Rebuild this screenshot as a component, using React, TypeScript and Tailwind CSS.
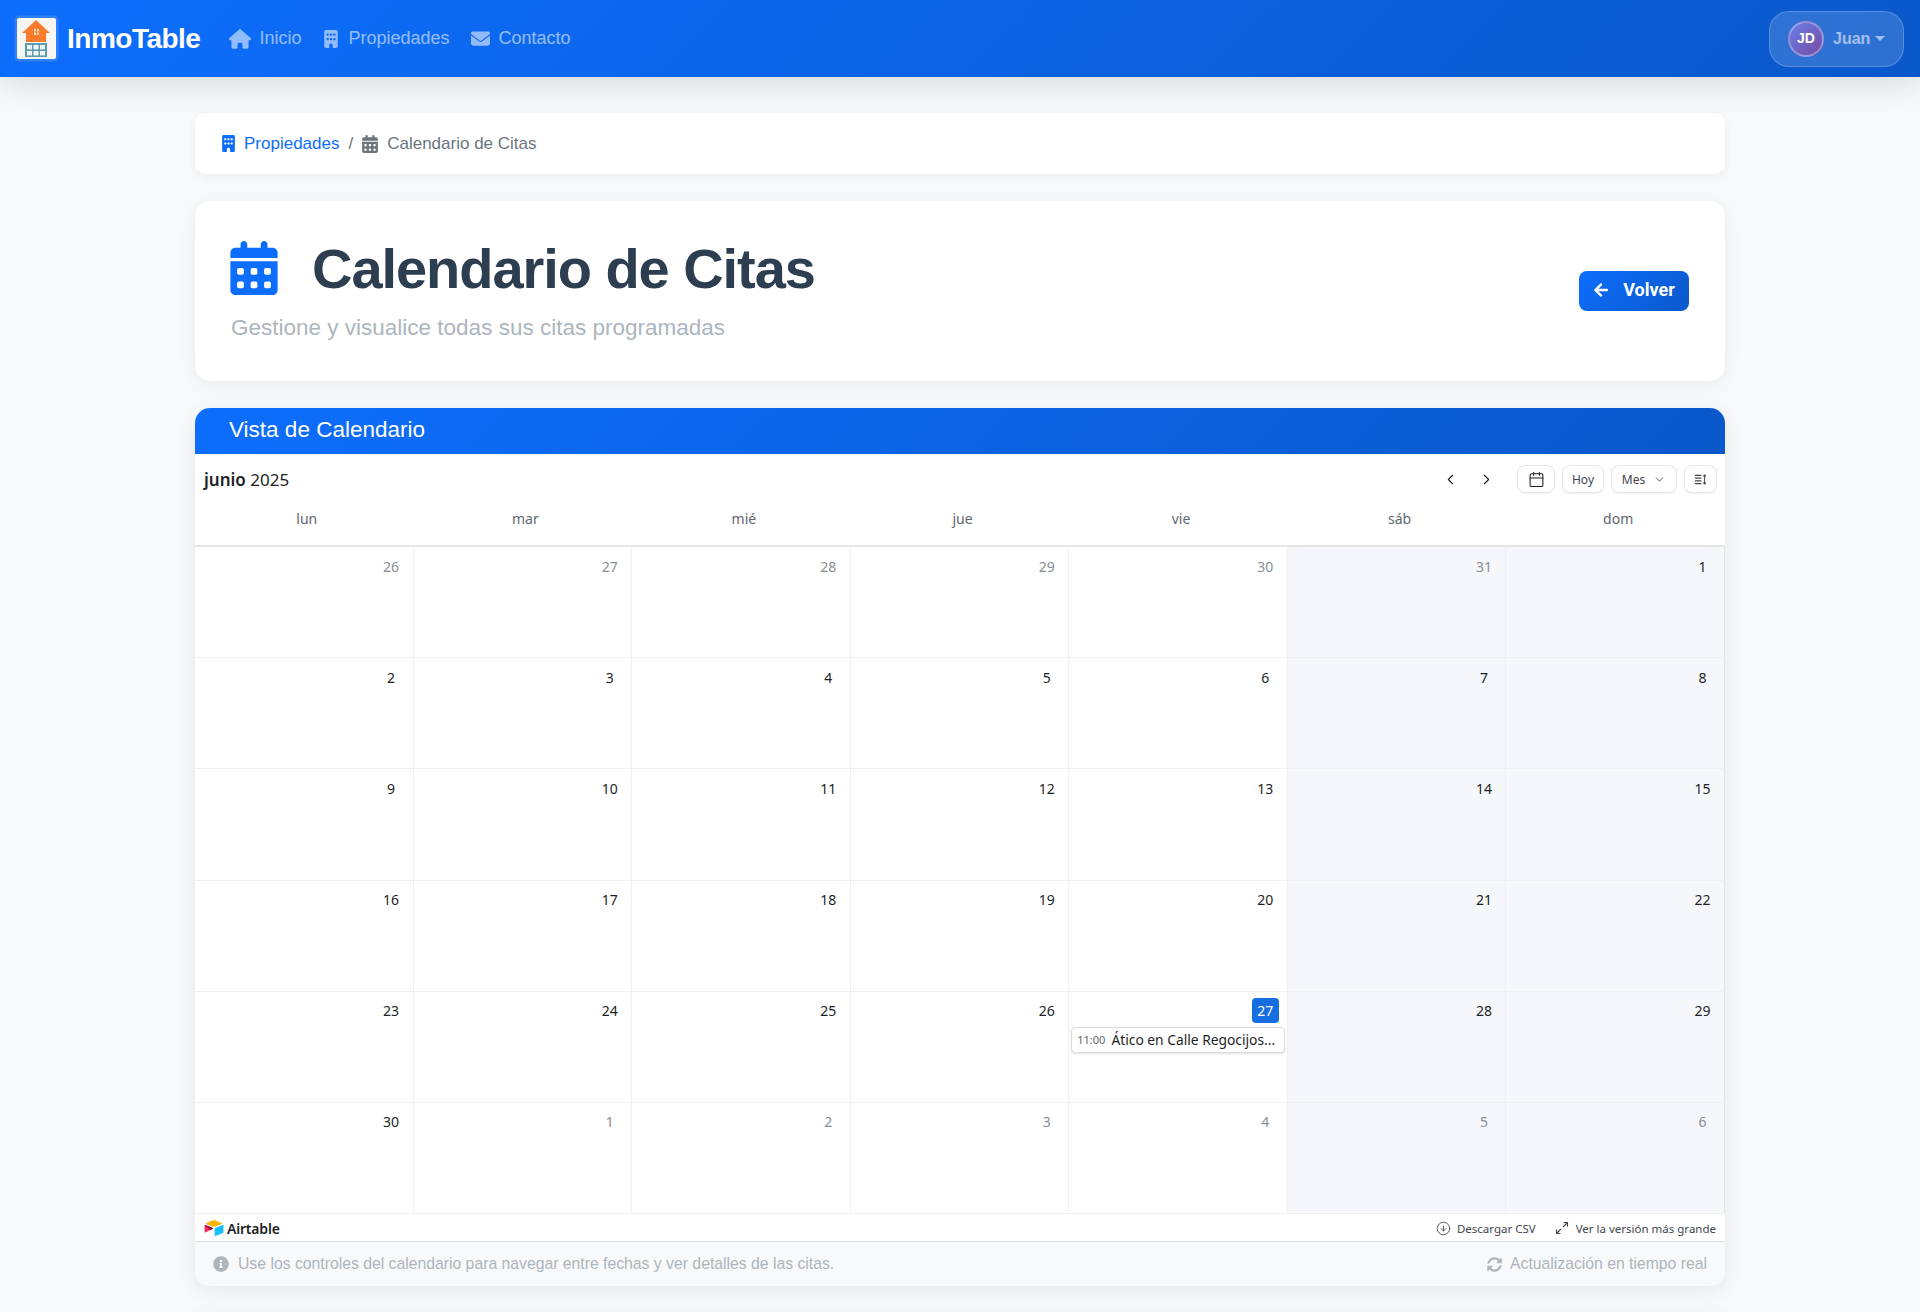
import { ChevronDown, ChevronLeft, ChevronRight, CircleArrowDown, Calendar } from 'lucide-react'
import { FaArrowLeft, FaInfoCircle, FaSyncAlt } from 'react-icons/fa'
import { FaBuilding, FaCalendarDays, FaEnvelope, FaHouse } from 'react-icons/fa6'

const weekdays = ['lun', 'mar', 'mié', 'jue', 'vie', 'sáb', 'dom']

const days: { n: number; muted?: boolean }[] = [
  ...[26, 27, 28, 29, 30, 31].map((n) => ({ n, muted: true })),
  ...Array.from({ length: 30 }, (_, i) => ({ n: i + 1 })),
  ...[1, 2, 3, 4, 5, 6].map((n) => ({ n, muted: true })),
]

function Logo() {
  return (
    <div className="ml-[1px] h-[41px] w-[39px] rounded-[2px] bg-[#f7f6f2] ring-[2.5px] ring-[#2f80fb]">
      <svg viewBox="0 0 39 41" className="h-[41px] w-[39px]">
        <path d="M19 2 L33 15 H29 V24 H9 V15 H5 Z" fill="#fb7b2c" />
        <rect x="17" y="11" width="2" height="2.4" fill="#fde3d0" />
        <rect x="20" y="11" width="2" height="2.4" fill="#fde3d0" />
        <rect x="17" y="14.5" width="2" height="2.4" fill="#fde3d0" />
        <rect x="20" y="14.5" width="2" height="2.4" fill="#fde3d0" />
        <rect x="8" y="25" width="22" height="14" fill="#5f9bb0" />
        {[10, 16.5, 23].map((x) =>
          [27, 33].map((y) => <rect key={`${x}-${y}`} x={x} y={y} width="5" height="4.4" fill="#f1f5f6" />),
        )}
      </svg>
    </div>
  )
}

function NavLink({ icon, label }: { icon: React.ReactNode; label: string }) {
  return (
    <a className="flex items-center gap-[8px] text-[18px] font-medium text-white/55">
      {icon}
      <span>{label}</span>
    </a>
  )
}

function ToolButton({ children, className }: { children: React.ReactNode; className: string }) {
  return (
    <div
      className={`flex h-[28px] items-center justify-center rounded-[8px] border border-[#e5e5e5] bg-white shadow-[0_1px_1px_rgba(0,0,0,0.06)] ${className}`}
    >
      {children}
    </div>
  )
}

function AirtableMark() {
  return (
    <svg viewBox="0 0 200 170" className="h-[16px] w-[20px]">
      <path d="M90 3 L16 34 c-4 2 -4 7 0 9 l75 30 c6 2 12 2 18 0 l75 -30 c4 -2 4 -7 0 -9 L109 3 c-6 -2 -13 -2 -19 0 z" fill="#fcb400" />
      <path d="M107 90 v75 c0 4 4 6 7 5 l83 -33 c2 -1 3 -3 3 -5 V57 c0 -4 -4 -6 -7 -5 l-83 33 c-2 1 -3 3 -3 5 z" fill="#18bfff" />
      <path d="M88 94 L63 106 L9 132 c-4 2 -9 -1 -9 -5 V57 c0 -2 1 -3 2 -4 l3 -1 c1 0 3 0 4 1 l79 31 c4 2 4 8 0 10 z" fill="#f82b60" />
      <path d="M88 94 L63 106 L2 53 l3 -1 c1 0 3 0 4 1 l79 31 c4 2 4 8 0 10 z" fill="#8a0e2e" />
    </svg>
  )
}

function CalendarEmbed() {
  return (
    <div className="font-['Noto_Sans',sans-serif] text-[#1d1f25]">
      <div className="flex h-[46px] items-center pl-[9px] pr-[8px] pt-[4px]">
        <div className="text-[17px] leading-none">
          <span className="font-semibold">junio</span> 2025
        </div>
        <div className="ml-auto flex items-center">
          <ChevronLeft size={17} strokeWidth={1.6} className="mr-[19px]" />
          <ChevronRight size={17} strokeWidth={1.6} className="mr-[22px]" />
          <ToolButton className="mr-[7px] w-[38px]">
            <Calendar size={17} strokeWidth={1.5} />
          </ToolButton>
          <ToolButton className="mr-[7px] w-[42px] pt-[1px] text-[12px] text-[#41454d]">Hoy</ToolButton>
          <ToolButton className="mr-[7px] w-[66px] gap-[8px] pt-[1px] text-[12px] text-[#41454d]">
            Mes
            <ChevronDown size={13} strokeWidth={1.6} />
          </ToolButton>
          <ToolButton className="w-[33px]">
            <svg viewBox="0 0 14 12" className="h-[11px] w-[13px]" stroke="#41454d" strokeWidth="1.1" fill="none">
              <path d="M1 1.5h7M1 4.5h7M1 7.5h7M1 10.5h7M11.5 1v10M10 2.5l1.5-1.5 1.5 1.5M10 9.5l1.5 1.5 1.5-1.5" />
            </svg>
          </ToolButton>
        </div>
      </div>
      <div className="grid h-[47px] grid-cols-7 border-b-2 border-[#e5e5e5] pb-[9px]">
        {weekdays.map((d) => (
          <div key={d} className="flex items-center justify-center pl-[5px] text-[14px] text-[#616670]">
            {d}
          </div>
        ))}
      </div>
      <div className="grid grid-cols-7">
        {days.map((d, i) => {
          const col = i % 7
          const today = d.n === 27 && !d.muted
          return (
            <div
              key={i}
              className={`relative h-[111.2px] border-b border-[#f0f0f0] pl-[2px] pr-[2px] pt-[6.5px] ${
                col < 6 ? 'border-r' : 'border-r border-r-[#e5e5e5]'
              } ${col >= 5 ? 'bg-[#f6f7fa]' : 'bg-white'}`}
            >
              <div className="flex h-[25px] justify-end pr-[6px] text-[14px] leading-[25px]">
                <span
                  className={`w-[27px] text-center ${
                    today ? 'rounded-[4px] bg-[#166ee1] text-white' : d.muted ? 'text-[#898d95]' : ''
                  }`}
                >
                  {d.n}
                </span>
              </div>
              {today && (
                <div className="mt-[4px] flex h-[26px] items-center gap-[6px] rounded-[4px] border border-[#dcdcdc] bg-white px-[5px] text-[13.8px] shadow-[0_1px_2px_rgba(0,0,0,0.12)]">
                  <span className="text-[11px] text-[#616670]">11:00</span>
                  <span className="truncate">Ático en Calle Regocijos...</span>
                </div>
              )}
            </div>
          )
        })}
      </div>
      <div className="flex h-[27px] items-center bg-white pl-[9px] pr-[9px] pt-[1px] text-[11.5px] text-[#41454d]">
        <AirtableMark />
        <span className="ml-[3px] text-[14px] font-semibold tracking-[-0.2px] text-[#1d1f25]">Airtable</span>
        <div className="ml-auto flex items-center gap-[6px]">
          <CircleArrowDown size={15} strokeWidth={1.4} />
          <span>Descargar CSV</span>
        </div>
        <div className="ml-[19px] flex items-center gap-[7px]">
          <svg viewBox="0 0 14 14" className="h-[14px] w-[14px]" stroke="#41454d" strokeWidth="1.1" fill="none">
            <path d="M8.5 1.5h4v4M12.5 1.5l-4.5 4.5M5.5 12.5h-4v-4M1.5 12.5l4.5-4.5" />
          </svg>
          <span>Ver la versión más grande</span>
        </div>
      </div>
    </div>
  )
}

export default function App() {
  return (
    <div className="h-[1312px] overflow-hidden bg-[#f8f9fa] font-['Liberation_Sans',sans-serif]">
      <nav className="relative z-10 flex h-[77px] items-center bg-[linear-gradient(135deg,#0d6efd_0%,#0a58ca_100%)] pl-[16px] pr-[16px] shadow-[0_8px_32px_rgba(0,0,0,0.12)]">
        <Logo />
        <span className="ml-[11px] text-[28px] font-bold tracking-[-0.5px] text-white">InmoTable</span>
        <div className="ml-[29px] flex items-center gap-[21px]">
          <NavLink icon={<FaHouse size={22} />} label="Inicio" />
          <NavLink icon={<FaBuilding size={18} />} label="Propiedades" />
          <NavLink icon={<FaEnvelope size={19} className="mr-[1px]" />} label="Contacto" />
        </div>
        <div className="ml-auto flex h-[56px] w-[135px] items-center rounded-[20px] border border-white/20 bg-white/15 pl-[18px]">
          <div className="flex h-[36px] w-[36px] items-center justify-center rounded-full border-2 border-white/30 bg-[linear-gradient(135deg,#667eea,#764ba2)] text-[14px] font-bold text-white">
            JD
          </div>
          <span className="ml-[9px] text-[16px] font-bold text-white/55">Juan</span>
          <span className="ml-[5px] border-x-[5px] border-t-[5px] border-x-transparent border-t-white/55" />
        </div>
      </nav>

      <main className="mx-auto w-[1530px] pt-[36px]">
        <div className="flex h-[61px] items-center rounded-[10px] bg-white pl-[25px] text-[17px] shadow-[0_2px_10px_rgba(0,0,0,0.06)]">
          <FaBuilding size={17} className="text-[#0d6efd]" />
          <span className="ml-[7px] text-[#0d6efd]">Propiedades</span>
          <span className="ml-[9px] mr-[8px] text-[#6c757d]">/</span>
          <FaCalendarDays size={18} className="text-[#6c757d]" />
          <span className="ml-[8px] text-[#6c757d]">Calendario de Citas</span>
        </div>

        <div className="mt-[27px] flex h-[180px] items-center justify-between rounded-[15px] bg-white pl-[36px] pr-[36px] shadow-[0_4px_20px_rgba(0,0,0,0.06)]">
          <div className="pb-[3px]">
            <div className="flex items-center">
              <FaCalendarDays size={54} className="-ml-[4px] text-[#0d6efd]" />
              <h1 className="ml-[31px] text-[56px] font-bold leading-[1.2] tracking-[-1.05px] text-[#2c3e50]">
                Calendario de Citas
              </h1>
            </div>
            <p className="mt-[9px] text-[22.5px] text-[#adb5bd]">Gestione y visualice todas sus citas programadas</p>
          </div>
          <button className="flex h-[40px] w-[110px] items-center justify-center gap-[14px] rounded-[8px] bg-[linear-gradient(135deg,#0d6efd,#0a58ca)] pb-[3px] font-['Roboto',sans-serif] text-[18px] font-bold text-white">
            <FaArrowLeft size={16} />
            Volver
          </button>
        </div>

        <div className="mt-[27px] overflow-hidden rounded-[15px] bg-white shadow-[0_4px_20px_rgba(0,0,0,0.08)]">
          <div className="flex h-[46px] items-center bg-[linear-gradient(135deg,#0d6efd_0%,#0a58ca_100%)] pb-[2px] pl-[34px] text-[22.5px] font-medium text-white">
            Vista de Calendario
          </div>
          <CalendarEmbed />
          <div className="flex h-[45px] items-center justify-between border-t border-[#e0e0e0] bg-[#f8f9fa] px-[18px] text-[15.75px] text-[#adb5bd]">
            <div className="flex items-center gap-[9px]">
              <FaInfoCircle size={16} />
              <span>Use los controles del calendario para navegar entre fechas y ver detalles de las citas.</span>
            </div>
            <div className="flex items-center gap-[8px]">
              <FaSyncAlt size={15} />
              <span>Actualización en tiempo real</span>
            </div>
          </div>
        </div>

        {/* next card starts below the fold, only its shadow shows */}
        <div className="mt-[27px] h-[120px] rounded-[15px] bg-white shadow-[0_4px_20px_rgba(0,0,0,0.08)]" />
      </main>
    </div>
  )
}
